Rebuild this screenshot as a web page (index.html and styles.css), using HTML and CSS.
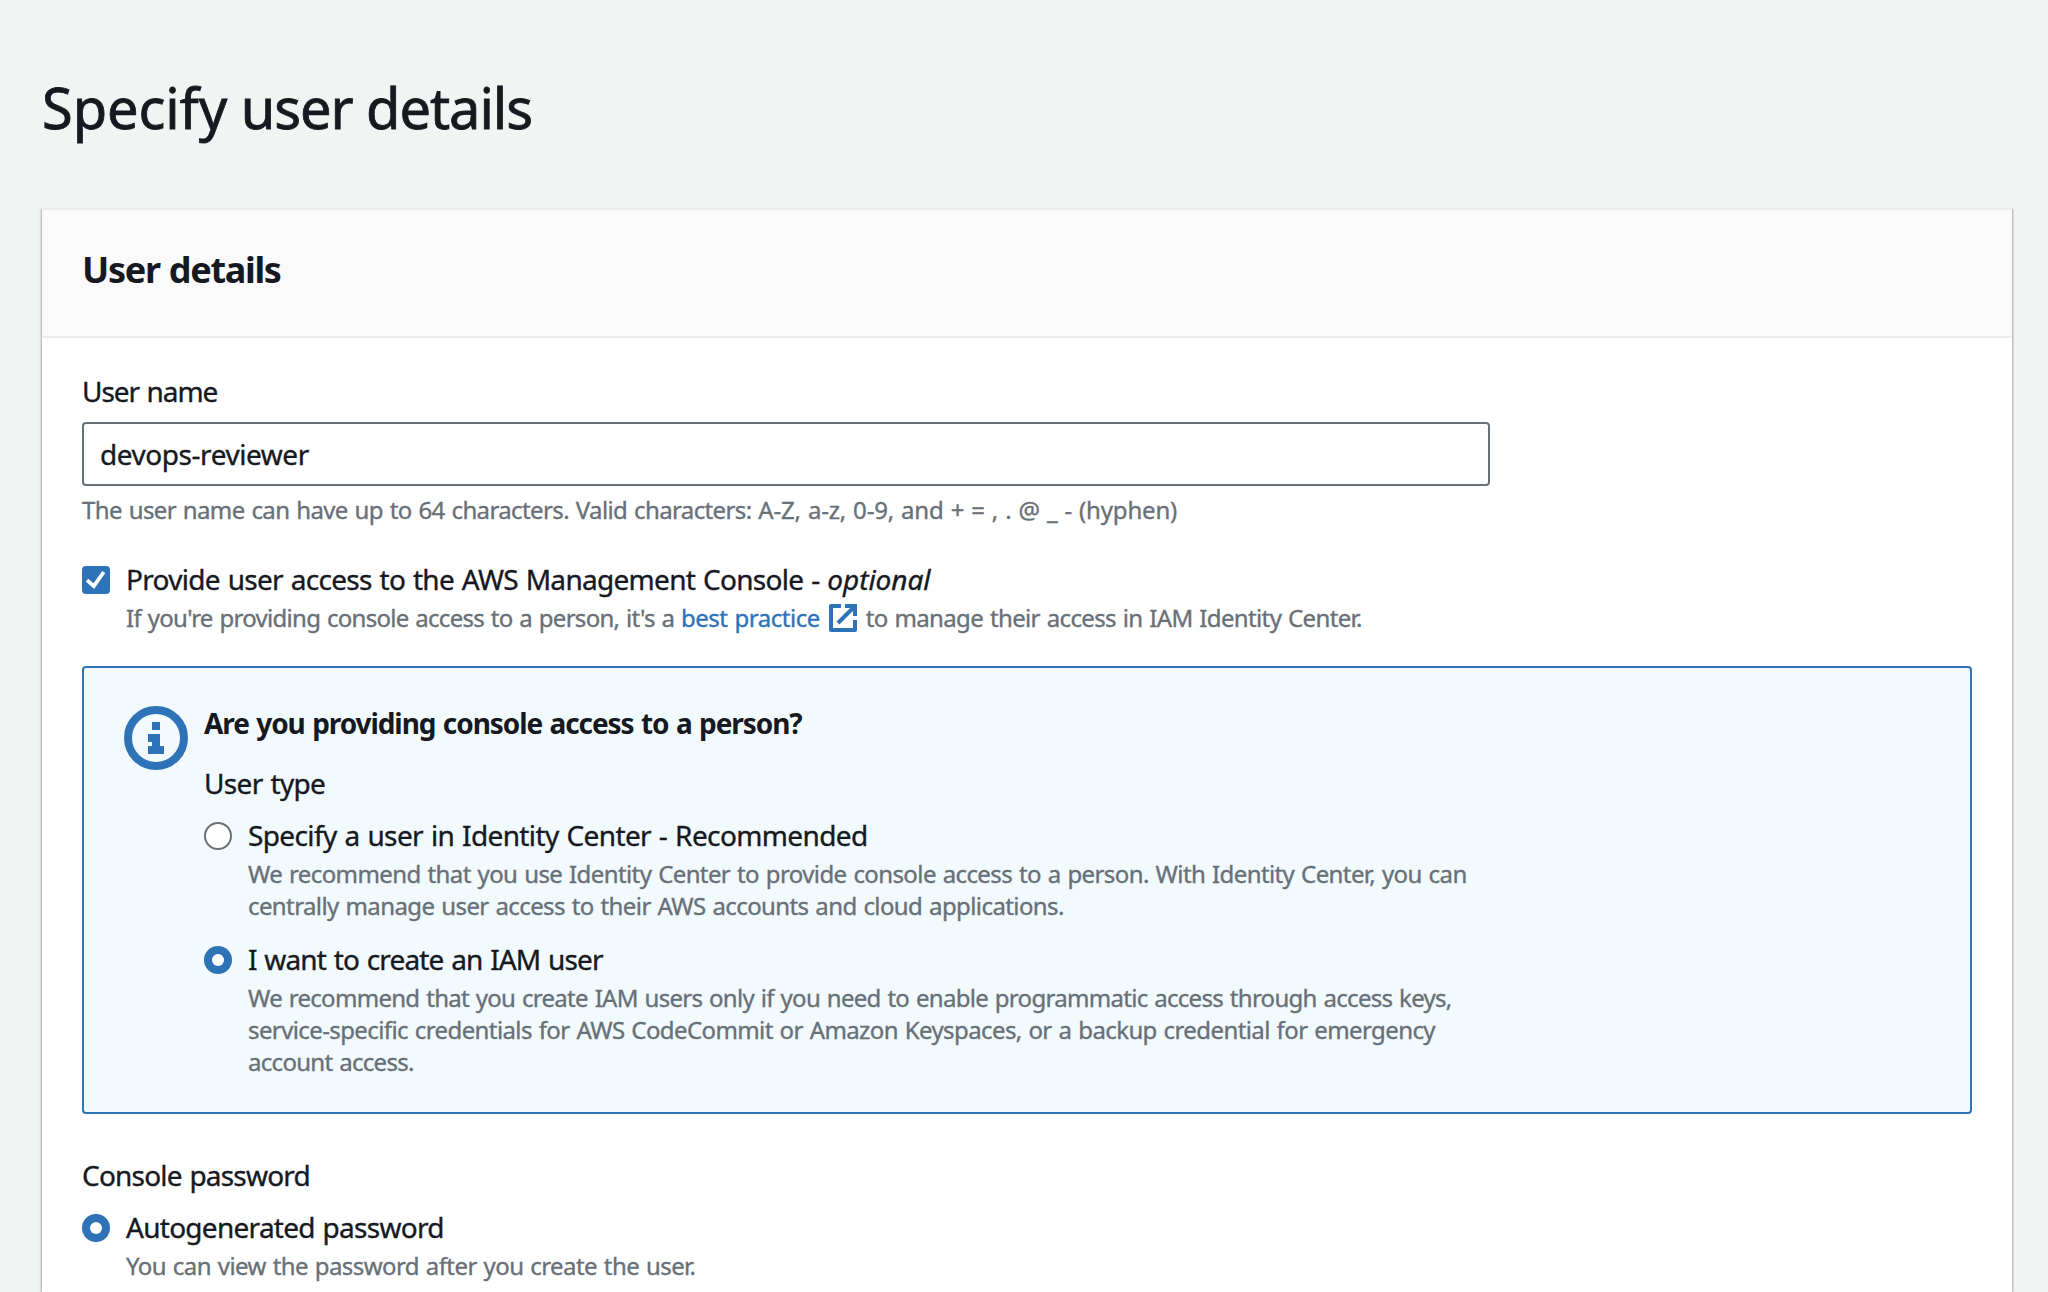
FILE: index.html
```html
<!DOCTYPE html>
<html lang="en">
<head>
<meta charset="utf-8">
<title>Specify user details</title>
<link rel="stylesheet" href="styles.css">
</head>
<body>
<main class="page">
  <h1 class="page-title"><span class="loose">Specify</span> user details</h1>
  <section class="card">
    <header class="card-header"><h2 class="card-title">User details</h2></header>
    <div class="card-body">
      <div class="label label-name">User name</div>
      <div class="input">devops-reviewer</div>
      <p class="hint hint-name">The user name can have up to 64 characters. Valid characters: <span class="charset">A-Z, a-z, 0-9, and + = , . @ _ - (hyphen)</span></p>

      <div class="option option-console">
        <svg class="control" viewBox="0 0 28 28"><rect width="28" height="28" rx="4" fill="#2e72b8"/><path d="M5 14.2l6.8 6L21.8 6" fill="none" stroke="#fff" stroke-width="3.8"/></svg>
        <div class="option-text">
          <div class="label label-access">Provide user access to the AWS Management Console - <em class="optional">optional</em></div>
          <p class="hint hint-practice">If you're providing console access to a person, it's a <a class="link"><span class="link-text">best practice</span><svg class="external" viewBox="0 0 28 28" fill="none" stroke="#2e72b8" stroke-width="4"><path d="M12 2H2v24h24V16" stroke-linejoin="round"/><path d="M16 2h10v10M25 3L9 19"/></svg></a><span class="after-link">to manage their access in IAM Identity Center.</span></p>
        </div>
      </div>

      <div class="alert">
        <svg class="info" viewBox="0 0 64 64"><circle cx="32" cy="32" r="28" fill="none" stroke="#2e72b8" stroke-width="8"/><path d="M28 16h8v8h-8zM24 28h12v12h4v8H24v-8h4v-4h-4z" fill="#2e72b8"/></svg>
        <div class="alert-content">
          <h3 class="alert-title">Are you providing console access to a person?</h3>
          <div class="label label-type">User type</div>
          <div class="option option-identity">
            <svg class="control" viewBox="0 0 28 28"><circle cx="14" cy="14" r="13" fill="#fff" stroke="#687078" stroke-width="2"/></svg>
            <div class="option-text">
              <div class="label label-identity">Specify a user in Identity Center - Recommended</div>
              <p class="hint">We recommend that you use Identity Center to provide console access to a person. With Identity Center, you can<br>centrally manage user access to their AWS accounts and cloud applications.</p>
            </div>
          </div>
          <div class="option option-iam">
            <svg class="control" viewBox="0 0 28 28"><circle cx="14" cy="14" r="14" fill="#2e72b8"/><circle cx="14" cy="14" r="6" fill="#fff"/></svg>
            <div class="option-text">
              <div class="label label-iam">I want to create an IAM user</div>
              <p class="hint"><span class="tight">We recommend that you create IAM users only if you need to enable programmatic access through access keys,</span><br>service-specific credentials for AWS CodeCommit or Amazon Keyspaces, or a backup credential for emergency<br><span class="tight">account access.</span></p>
            </div>
          </div>
        </div>
      </div>

      <div class="label label-password">Console password</div>
      <div class="option option-auto">
        <svg class="control" viewBox="0 0 28 28"><circle cx="14" cy="14" r="14" fill="#2e72b8"/><circle cx="14" cy="14" r="6" fill="#fff"/></svg>
        <div class="option-text">
          <div class="label label-auto">Autogenerated password</div>
          <p class="hint hint-auto">You can view the password after you create the user.</p>
        </div>
      </div>
    </div>
  </section>
</main>
</body>
</html>
```
FILE: styles.css
```css
* { box-sizing: border-box; }

body {
  margin: 0;
  background: #f2f4f3;
  color: #16191f;
  font: 400 28px/44px "Noto Sans", sans-serif;
  -webkit-text-stroke: 0.35px currentColor;
}

h1, h2, h3, p { margin: 0; }

.page {
  display: flex;
  flex-direction: column;
  height: 100vh;
  padding: 71px 36px 0 42px;
}

.page-title {
  margin-bottom: 65px;
  font-size: 56px;
  font-weight: 400;
  line-height: 72px;
  letter-spacing: -1.07px;
  -webkit-text-stroke-width: 0.8px;
}

.loose { letter-spacing: -0.1px; }

.card {
  flex: 1;
  border-top: 2px solid #eaeded;
  background: #fff;
  box-shadow: 1px 1px 2px 0 rgba(0, 7, 22, 0.3), -1px 1px 2px 0 rgba(0, 7, 22, 0.3);
  clip-path: inset(0 -8px 0 -8px);
}

.card-header {
  padding: 38px 40px 44px;
  border-bottom: 2px solid #eaeded;
  background: #fafafa;
}

.card-title {
  font-size: 36px;
  line-height: 44px;
  font-weight: 700;
  letter-spacing: -1.3px;
  word-spacing: 1px;
  -webkit-text-stroke-width: 0;
}

.card-body { padding: 31px 40px 0; }

.label { white-space: nowrap; word-spacing: 1.2px; }

.label-name { letter-spacing: -1.05px; }

.input {
  width: 1408px;
  height: 64px;
  margin-top: 9px;
  padding: 0 16px;
  border: 2px solid #687078;
  border-radius: 4px;
  line-height: 60px;
  letter-spacing: -0.45px;
}

.hint {
  color: #687078;
  font-size: 24px;
  line-height: 32px;
  letter-spacing: -0.6px;
  word-spacing: 1.2px;
  white-space: nowrap;
}

.hint-name { margin-top: 8px; letter-spacing: -0.62px; }

.charset { letter-spacing: -0.18px; word-spacing: 1px; }

.option { display: flex; gap: 16px; }

.option .hint { margin-top: 1px; }

.control { flex: none; width: 28px; height: 28px; margin-top: 9px; }

.option-console { margin-top: 31px; }

.label-access { letter-spacing: -0.7px; }

.optional { letter-spacing: -0.05px; }

.hint-practice { display: flex; letter-spacing: -0.71px; white-space: pre; }

.link { display: flex; color: #2e72b8; }

.link-text { letter-spacing: -0.47px; }

.external { width: 28px; height: 28px; margin: 2px 9px 0 9px; }

.after-link { letter-spacing: -0.64px; }

.alert {
  display: flex;
  gap: 16px;
  margin-top: 32px;
  padding: 33px 40px 34px;
  border: 2px solid #2e72b8;
  border-radius: 4px;
  background: #f2fafd;
}

.info { flex: none; width: 64px; height: 64px; margin-top: 5px; }

.alert-title {
  padding-top: 1px;
  font-size: 28px;
  line-height: 43px;
  font-weight: 700;
  letter-spacing: -1.07px;
  word-spacing: 1.2px;
  -webkit-text-stroke-width: 0;
}

.label-type { margin-top: 16px; letter-spacing: -0.65px; }

.option-identity { margin-top: 8px; }

.label-identity { letter-spacing: -0.62px; }

.option-iam { margin-top: 15px; }

.label-iam { letter-spacing: -0.84px; }

.tight { letter-spacing: -0.7px; }

.label-password { margin-top: 39px; letter-spacing: -0.8px; }

.option-auto { margin-top: 8px; }

.label-auto { letter-spacing: -0.72px; }

.option .hint-auto { letter-spacing: -0.58px; }
```
